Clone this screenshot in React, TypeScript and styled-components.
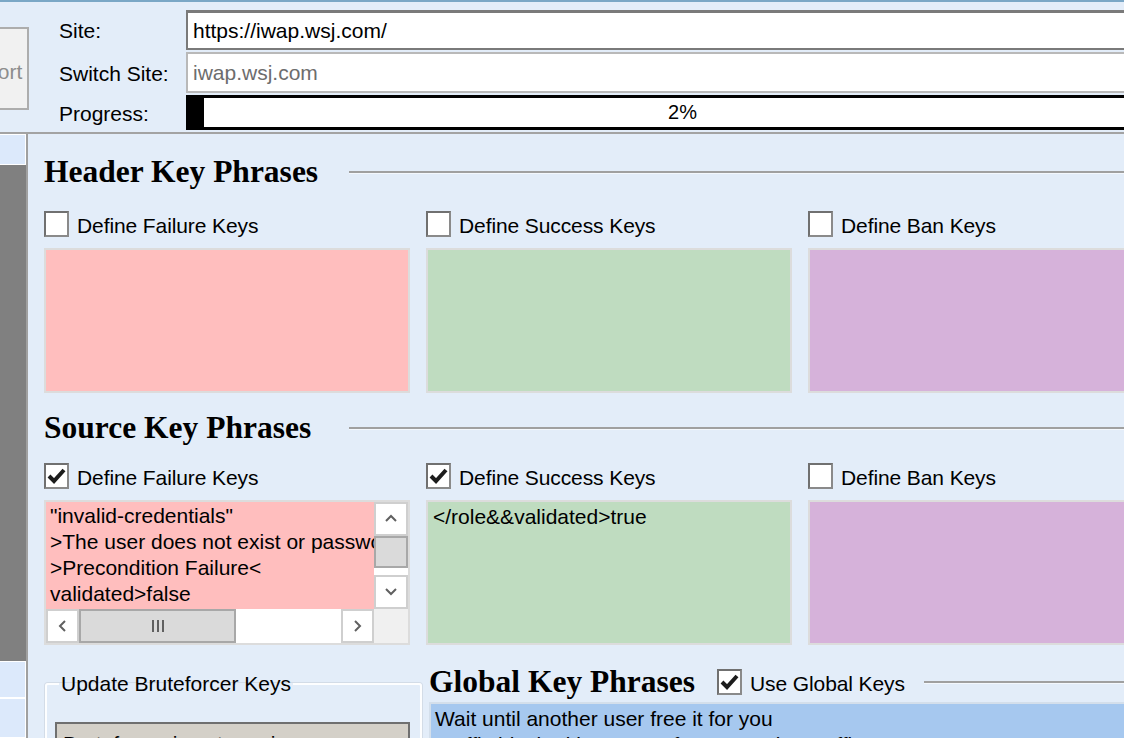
import React from "react";
import styled, { createGlobalStyle } from "styled-components";

const GlobalStyle = createGlobalStyle`
  html, body {
    margin: 0;
    padding: 0;
    background: #e3edf9;
  }
  * {
    box-sizing: border-box;
  }
`;

const PROGRESS = 2;

const KEY_COLORS = {
  failure: "#ffbebe",
  success: "#bfdcc0",
  ban: "#d6b2da",
};

const failureKeys = [
  '"invalid-credentials"',
  ">The user does not exist or password is invalid<",
  ">Precondition Failure<",
  "validated>false",
];

const globalKeys = [
  "Wait until another user free it for you",
  "Traffic blocked because of suspected IP traffic",
];

const CheckMark = () => (
  <svg width="19" height="18" viewBox="0 0 19 18">
    <path d="M2 9 L7 14 L17 3" fill="none" stroke="#1c1c1c" strokeWidth="4" strokeLinejoin="miter" />
  </svg>
);

const Chevron: React.FC<{ dir: "up" | "down" | "left" | "right" }> = ({ dir }) => {
  const pts = {
    up: "1,8 6,3 11,8",
    down: "1,3 6,8 11,3",
    left: "8,1 3,6 8,11",
    right: "3,1 8,6 3,11",
  }[dir];
  return (
    <svg width="12" height="12" viewBox="0 0 12 12">
      <polyline points={pts} fill="none" stroke="#606060" strokeWidth="2" />
    </svg>
  );
};

interface CheckProps {
  label: string;
  checked?: boolean;
}

const Check: React.FC<CheckProps> = ({ label, checked }) => (
  <CheckLine>
    <Box>{checked && <CheckMark />}</Box>
    <CheckText>{label}</CheckText>
  </CheckLine>
);

interface HeadingProps {
  title: string;
  width?: number;
  gap?: number;
  children?: React.ReactNode;
}

const SectionHeading: React.FC<HeadingProps> = ({ title, width, gap = 0, children }) => (
  <HeadingRow>
    <Heading $width={width}>{title}</Heading>
    {children}
    <Rule $gap={gap} />
  </HeadingRow>
);

const FailureList = () => (
  <ScrollBox>
    <ScrollText>
      {failureKeys.map((k) => (
        <div key={k}>{k}</div>
      ))}
    </ScrollText>
    <VBar>
      <SBtn>
        <Chevron dir="up" />
      </SBtn>
      <VThumb />
      <Track />
      <SBtn>
        <Chevron dir="down" />
      </SBtn>
    </VBar>
    <HBar>
      <SBtn>
        <Chevron dir="left" />
      </SBtn>
      <HThumb>
        <Grip />
        <Grip />
        <Grip />
      </HThumb>
      <Track />
      <SBtn>
        <Chevron dir="right" />
      </SBtn>
    </HBar>
    <Corner />
  </ScrollBox>
);

export default function App() {
  return (
    <>
      <GlobalStyle />
      <Window>
        <Header>
          <StubButton>Import</StubButton>
          <FieldGrid>
            <FieldLabel>Site:</FieldLabel>
            <TextBox $active>https://iwap.wsj.com/</TextBox>
            <FieldLabel>Switch Site:</FieldLabel>
            <TextBox>iwap.wsj.com</TextBox>
            <FieldLabel>Progress:</FieldLabel>
            <Progress>
              <ProgressFill style={{ width: `${PROGRESS * 0.8}%` }} />
              <ProgressText>{PROGRESS}%</ProgressText>
            </Progress>
          </FieldGrid>
        </Header>

        <Body>
          <Rail>
            <RailCell $h={31} />
            <RailDark />
            <RailCell $h={37} />
            <RailCell $h={40} />
          </Rail>

          <Main>
            <Section $top={20}>
              <SectionHeading title="Header Key Phrases" width={305} />
              <Columns $top={21}>
                <Check label="Define Failure Keys" />
                <Check label="Define Success Keys" />
                <Check label="Define Ban Keys" />
              </Columns>
              <Columns $top={11}>
                <KeyBox $bg={KEY_COLORS.failure} />
                <KeyBox $bg={KEY_COLORS.success} />
                <KeyBox $bg={KEY_COLORS.ban} />
              </Columns>
            </Section>

            <Section $top={17}>
              <SectionHeading title="Source Key Phrases" width={305} />
              <Columns $top={17}>
                <Check label="Define Failure Keys" checked />
                <Check label="Define Success Keys" checked />
                <Check label="Define Ban Keys" />
              </Columns>
              <Columns $top={11}>
                <FailureList />
                <KeyBox $bg={KEY_COLORS.success}>{"</role&&validated>true"}</KeyBox>
                <KeyBox $bg={KEY_COLORS.ban} />
              </Columns>
            </Section>

            <Bottom>
              <GroupBox>
                <legend>Update Bruteforcer Keys</legend>
                <StatusBox>Bruteforcer is not running</StatusBox>
              </GroupBox>
              <GlobalPane>
                <SectionHeading title="Global Key Phrases" gap={19}>
                  <GlobalCheck>
                    <Check label="Use Global Keys" checked />
                  </GlobalCheck>
                </SectionHeading>
                <ListBox>
                  {globalKeys.map((k) => (
                    <div key={k}>{k}</div>
                  ))}
                </ListBox>
              </GlobalPane>
            </Bottom>
          </Main>
        </Body>
      </Window>
    </>
  );
}

const Window = styled.div`
  width: 1124px;
  height: 738px;
  overflow: hidden;
  background: #e3edf9;
  border-top: 2px solid #7aa7c6;
  display: flex;
  flex-direction: column;
  font-family: "Liberation Sans", Arial, sans-serif;
  font-size: 21px;
  color: #000;
`;

const Header = styled.div`
  height: 130px;
  flex-shrink: 0;
  display: flex;
  align-items: flex-start;
  overflow: hidden;
`;

const StubButton = styled.div`
  width: 73px;
  height: 83px;
  margin-left: -44px;
  margin-top: 25px;
  padding-top: 6px;
  flex-shrink: 0;
  display: flex;
  align-items: center;
  justify-content: center;
  background: #f1f1f1;
  border: 2px solid #adadad;
  color: #8d8d8d;
`;

const FieldGrid = styled.div`
  margin-left: 30px;
  margin-top: 8px;
  display: grid;
  grid-template-columns: 127px 994px;
  grid-template-rows: 40px 41px 35px;
  row-gap: 2px;
  flex-shrink: 0;
`;

const FieldLabel = styled.div`
  display: flex;
  align-items: center;
  padding-top: 2px;
`;

const TextBox = styled.div<{ $active?: boolean }>`
  display: flex;
  align-items: center;
  padding-left: 5px;
  background: #fff;
  border: 2px solid ${(p) => (p.$active ? "#7a7a7a" : "#b9b9b9")};
  border-top-width: ${(p) => (p.$active ? "3px" : "2px")};
  color: ${(p) => (p.$active ? "#000" : "#6d6d6d")};
`;

const Progress = styled.div`
  position: relative;
  background: #fff;
  border: 3px solid #000;
  border-left-width: 2px;
  display: flex;
  align-items: center;
`;

const ProgressFill = styled.div`
  align-self: stretch;
  background: #000;
`;

const ProgressText = styled.span`
  position: absolute;
  left: 0;
  right: 0;
  text-align: center;
  font-size: 20px;
`;

const Body = styled.div`
  flex: 1;
  display: flex;
  border-top: 2px solid #a3a3a3;
  overflow: hidden;
`;

const Rail = styled.div`
  width: 28px;
  flex-shrink: 0;
  display: flex;
  flex-direction: column;
  border-right: 2px solid #a0a0a0;
`;

const RailCell = styled.div<{ $h: number }>`
  height: ${(p) => p.$h}px;
  flex-shrink: 0;
  background: #dce9fb;
  border: 1px solid #fff;
  border-left: none;
`;

const RailDark = styled.div`
  flex: 1;
  background: #808080;
`;

const Main = styled.div`
  flex: 1;
  padding-left: 16px;
  display: flex;
  flex-direction: column;
  overflow: hidden;
`;

const Section = styled.div<{ $top: number }>`
  margin-top: ${(p) => p.$top}px;
  display: flex;
  flex-direction: column;
`;

const HeadingRow = styled.div`
  height: 36px;
  display: flex;
  align-items: center;
`;

const Heading = styled.h2<{ $width?: number }>`
  margin: 0;
  min-width: ${(p) => (p.$width ? `${p.$width}px` : "0")};
  font-family: "Liberation Serif", "Times New Roman", serif;
  font-weight: bold;
  font-size: 31.5px;
  white-space: nowrap;
`;

const Rule = styled.div<{ $gap: number }>`
  flex: 1;
  margin-left: ${(p) => p.$gap}px;
  border-top: 2px solid #a0a0a0;
  border-bottom: 1px solid #f4f8fd;
`;

const Columns = styled.div<{ $top: number }>`
  margin-top: ${(p) => p.$top}px;
  display: grid;
  grid-template-columns: repeat(3, 366px);
  column-gap: 16px;
`;

const CheckLine = styled.label`
  height: 26px;
  display: flex;
  align-items: center;
  white-space: nowrap;
`;

const CheckText = styled.span`
  padding-top: 3px;
  letter-spacing: -0.1px;
`;

const Box = styled.span`
  width: 25px;
  height: 26px;
  margin-right: 8px;
  flex-shrink: 0;
  display: flex;
  align-items: center;
  justify-content: center;
  background: #fff;
  border: 2px solid #707070;
  border-right-color: #8a8a8a;
  border-bottom-color: #8a8a8a;
`;

const KeyBox = styled.div<{ $bg: string }>`
  height: 145px;
  padding: 2px 5px;
  background: ${(p) => p.$bg};
  border: 2px solid #dcdcdc;
  line-height: 26px;
  white-space: pre;
`;

const ScrollBox = styled.div`
  height: 145px;
  border: 2px solid #dcdcdc;
  display: grid;
  grid-template-columns: 1fr 34px;
  grid-template-rows: 1fr 34px;
  overflow: hidden;
`;

const ScrollText = styled.div`
  background: ${KEY_COLORS.failure};
  padding: 1px 4px;
  line-height: 26px;
  white-space: nowrap;
  overflow: hidden;
`;

const VBar = styled.div`
  display: grid;
  grid-template-rows: 34px 32px 1fr 34px;
  background: #fff;
`;

const HBar = styled.div`
  display: grid;
  grid-template-columns: 33px 157px 1fr 33px;
  background: #fff;
`;

const SBtn = styled.div`
  display: flex;
  align-items: center;
  justify-content: center;
  background: #fff;
  border: 2px solid #cfcfcf;
`;

const VThumb = styled.div`
  background: #dadada;
  border: 2px solid #a8a8a8;
`;

const HThumb = styled(VThumb)`
  display: flex;
  align-items: center;
  justify-content: center;
  gap: 3px;
`;

const Grip = styled.span`
  width: 2px;
  height: 12px;
  background: #606060;
`;

const Track = styled.div`
  background: #fff;
`;

const Corner = styled.div`
  background: #f0f0f0;
`;

const Bottom = styled.div`
  margin-top: 19px;
  display: flex;
  align-items: flex-start;
`;

const GroupBox = styled.fieldset`
  width: 377px;
  margin: 7px 0 0 1px;
  padding: 0 10px 0 8px;
  flex-shrink: 0;
  border: 2px solid #fdfeff;
  border-radius: 3px;
  box-shadow: 0 0 0 1px #d3dce7;
  min-width: 0;

  legend {
    margin-left: 4px;
    padding: 0 2px;
    line-height: 26px;
  }
`;

const StatusBox = styled.div`
  margin-top: 25px;
  height: 44px;
  padding: 8px 6px;
  background: #d4d0c8;
  border: 2px solid #6f6f6f;
  border-bottom: none;
  white-space: nowrap;
`;

const GlobalPane = styled.div`
  margin-left: 7px;
  flex: 1;
  display: flex;
  flex-direction: column;
  min-width: 0;
`;

const GlobalCheck = styled.div`
  margin-left: 22px;
`;

const ListBox = styled.div`
  margin-top: 2px;
  height: 60px;
  padding: 2px 4px;
  background: #a6c8ef;
  border-top: 2px solid #d4dfeb;
  border-left: 2px solid #d4dfeb;
  line-height: 26px;
  white-space: nowrap;
`;
